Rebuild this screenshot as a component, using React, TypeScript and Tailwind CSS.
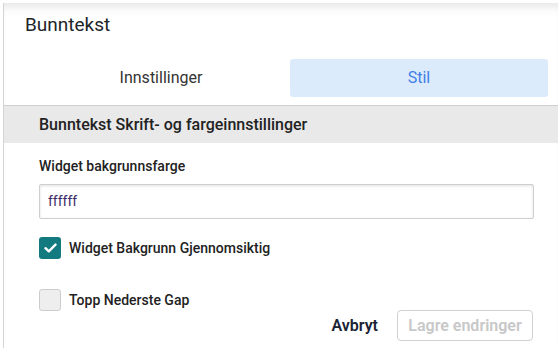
import React from "react";

export default function App() {
  return (
    <div
      className="w-[558px] h-[348px] bg-white pt-[3px] overflow-hidden"
      style={{ fontFamily: "Roboto, 'Liberation Sans', sans-serif" }}
    >
      <div className="ml-[3px] h-[345px] border-l border-[#d4d4d4] shadow-[inset_0_10px_10px_-6px_rgba(0,0,0,0.10)]">
        <div className="pt-[10px] pl-[21px] text-[19px] leading-[24px] text-[#212529]">Bunntekst</div>

        <div className="mt-[22px] pl-[28px] pr-[10px] flex">
          <div className="flex-1 h-[38px] flex items-center justify-center text-[16px] text-[#333]">
            Innstillinger
          </div>
          <div className="flex-1 h-[38px] flex items-center justify-center rounded-[3px] bg-[#dcebfc] text-[16px] text-[#3f7ee6]">
            Stil
          </div>
        </div>

        <div className="mt-[8px] border-t border-[#d0d0d0] bg-[#e9e9e9] h-[38px] flex items-center pl-[35px] text-[16px] font-medium text-[#222]">
          Bunntekst Skrift- og fargeinnstillinger
        </div>

        <div className="pl-[35px] pr-[24px]">
          <div className="mt-[13px] text-[14px] leading-[20px] font-medium text-[#222]">Widget bakgrunnsfarge</div>
          <div className="mt-[8px] h-[35px] border border-[#cfcfcf] rounded-[2px] shadow-[inset_0_1px_3px_rgba(0,0,0,0.12)] flex items-center pl-[8px] text-[14px] text-[#3b2b66]">
            ffffff
          </div>

          <div className="mt-[18px] flex items-center">
            <div className="w-[22px] h-[22px] rounded-[3px] bg-[#137b80] flex items-center justify-center">
              <svg width="13" height="10" viewBox="0 0 13 10" fill="none">
                <path d="M1.5 5.2 L4.8 8.3 L11.5 1.6" stroke="white" strokeWidth="2.4" strokeLinecap="round" strokeLinejoin="round" />
              </svg>
            </div>
            <span className="ml-[8px] text-[14px] font-medium text-[#222]">Widget Bakgrunn Gjennomsiktig</span>
          </div>

          <div className="mt-[30px] flex items-center">
            <div className="w-[22px] h-[22px] rounded-[3px] bg-[#eeeeee] border border-[#cccccc]" />
            <span className="ml-[8px] text-[14px] font-medium text-[#222]">Topp Nederste Gap</span>
          </div>
        </div>

        <div className="mt-[-1px] pr-[25px] flex justify-end items-center">
          <span className="text-[16px] font-semibold text-[#1a2233]">Avbryt</span>
          <div className="ml-[19px] w-[136px] h-[31px] border border-[#d0d0d0] rounded-[4px] flex items-center justify-center text-[16px] font-semibold text-[#c8c8c8]">
            Lagre endringer
          </div>
        </div>
      </div>
    </div>
  );
}
